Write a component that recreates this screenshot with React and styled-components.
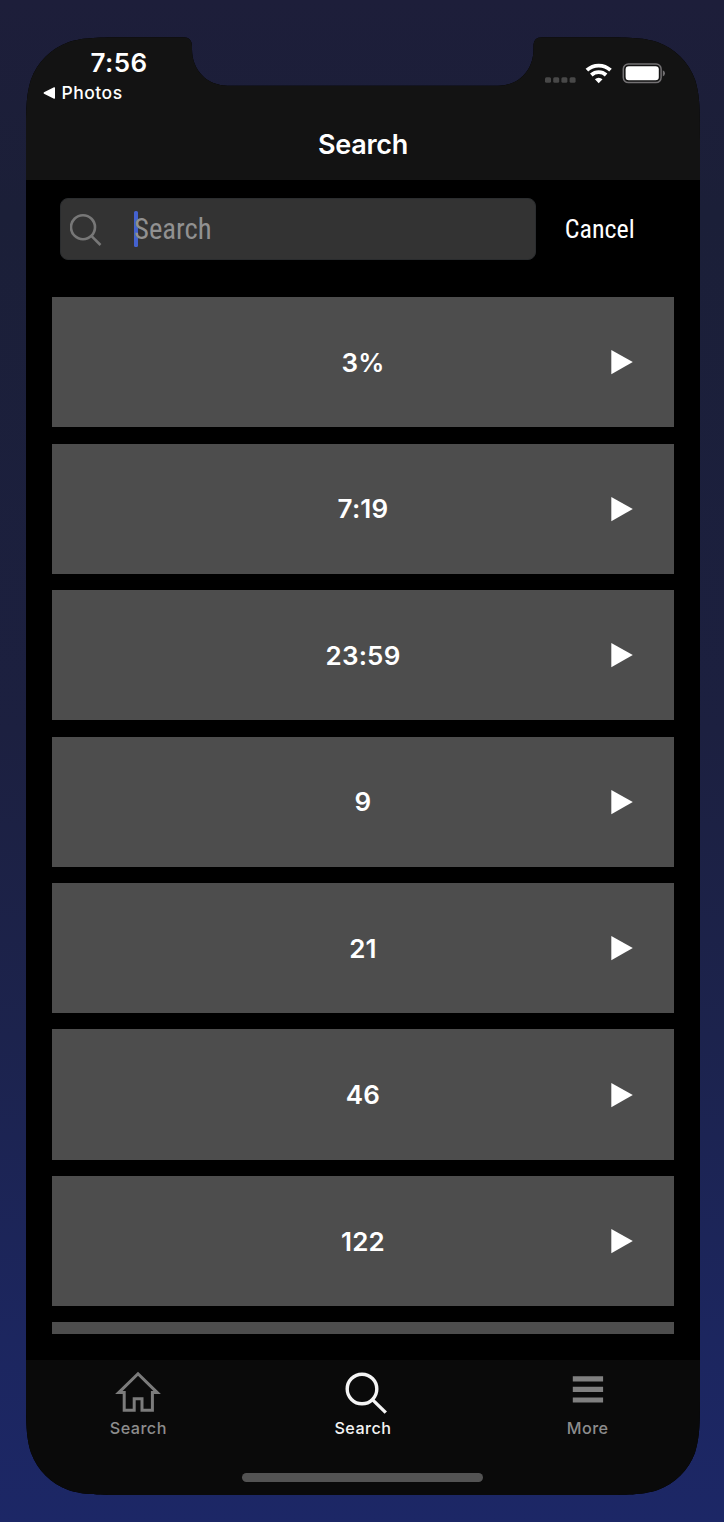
import React from 'react';
import styled, { createGlobalStyle } from 'styled-components';

const GlobalStyle = createGlobalStyle`
  *, *::before, *::after { box-sizing: border-box; }
  body { margin: 0; font-family: Inter, "Liberation Sans", sans-serif; }
  button { appearance: none; border: 0; padding: 0; background: none; color: inherit; font: inherit; }
`;

const Stage = styled.main`
  height: 1522px;
  padding: 37.3px 24px 27px 26px;
  background: linear-gradient(#1d1e3a 0, #1b1f38 14%, #1c2040 48%, #1c234d 68%, #1c265f 88%, #1c2766 100%);
`;

const OUTLINE = [
  'M102.4 0H157C163 0 166 3 166 9.5V12C166 33 181 48.4 202 48.4H472C493 48.4 507.5 33 507.5 12V9.5C507.5 3 510 0 516.5 0H571.6',
  'C601 0 615.8 0 631.7 5C649 11.3 662.7 25 669 42.3C674 58.2 674 73 674 102.4',
  'V1355.3C674 1384.8 674 1399.5 669 1415.4C662.7 1432.7 649 1446.4 631.7 1452.7C615.8 1457.7 601 1457.7 571.6 1457.7',
  'H102.4C73 1457.7 58.2 1457.7 42.3 1452.7C25 1446.4 11.3 1432.7 5 1415.4C0 1399.5 0 1384.8 0 1355.3',
  'V102.4C0 73 0 58.2 5 42.3C11.3 25 25 11.3 42.3 5C58.2 0 73 0 102.4 0Z',
].join('');

const Phone = styled.div`
  height: 1457.7px;
  display: flex;
  flex-direction: column;
  background: #000;
  color: #fff;
  clip-path: path('${OUTLINE}');
`;

const Header = styled.header`
  height: 143px;
  flex: none;
  background: #131313;
`;

const StatusBar = styled.div`
  height: 71px;
  display: flex;
  justify-content: space-between;
  padding: 11px 35.5px 0 16.5px;
`;

const StatusLeft = styled.div`
  display: flex;
  flex-direction: column;
`;

const Clock = styled.time`
  margin-left: 48px;
  font-size: 26px;
  line-height: 30px;
  font-weight: 580;
  letter-spacing: 0.4px;
`;

const BackLink = styled.button`
  display: flex;
  align-items: center;
  gap: 7px;
  margin-top: 3px;
  font-size: 17.5px;
  line-height: 24px;
  font-weight: 500;
  letter-spacing: 0.5px;
`;

const StatusIcons = styled.div`
  display: flex;
  align-items: flex-start;
  padding-top: 14px;
`;

const Title = styled.h1`
  margin: 0;
  padding-top: 19px;
  text-align: center;
  font-size: 27px;
  line-height: 36px;
  font-weight: 580;
  letter-spacing: -0.3px;
`;

const SearchRow = styled.div`
  flex: none;
  display: flex;
  align-items: center;
  height: 117px;
  padding: 0 65.3px 19.5px 34px;
  justify-content: space-between;
`;

const SearchField = styled.div`
  display: flex;
  align-items: center;
  width: 475.5px;
  height: 62px;
  padding-left: 9.3px;
  border-radius: 8px;
  border: 1px solid #2b2d2f;
  background: #333;
`;

const Caret = styled.span`
  width: 4px;
  height: 36px;
  margin-left: 31.3px;
  margin-right: -3.6px;
  border-radius: 1.5px;
  background: #4462cf;
`;

const Condensed = styled.span`
  font-family: "Roboto Condensed", Roboto, sans-serif;
  font-stretch: 75%;
  white-space: nowrap;
  line-height: 36px;
  font-size: ${(p) => p.$size}px;
  color: ${(p) => p.$color};
`;

const List = styled.ul`
  flex: none;
  height: 1036.6px;
  margin: 0 26px;
  padding: 0;
  list-style: none;
  overflow: hidden;
  display: flex;
  flex-direction: column;
  gap: 16.25px;
`;

const Item = styled.li`
  flex: none;
  display: grid;
  grid-template-columns: 1fr auto 1fr;
  align-items: center;
  height: 130.2px;
  padding: 0 41.5px;
  background: #4d4d4d;
  font-size: 26px;
  font-weight: 580;
  letter-spacing: 0.2px;
`;

const Value = styled.span`
  grid-column: 2;
  padding-top: 1px;
  line-height: 32px;
`;

const PlayIcon = styled.svg`
  justify-self: end;
  width: 22px;
  height: 26px;
  fill: #fff;
`;

const TabBar = styled.nav`
  flex: none;
  display: grid;
  grid-template-columns: repeat(3, 1fr);
  height: 108px;
  margin-top: 26px;
  background: #0a0a0a;
`;

const Tab = styled.button`
  display: flex;
  flex-direction: column;
  align-items: center;
  color: ${(p) => (p.$active ? '#f4f4f4' : '#8d8d8d')};
  padding-top: 8.8px;
  font-size: 16.2px;
  line-height: 23px;
  font-weight: 450;
  letter-spacing: 0.45px;
`;

const TabIcon = styled.svg`
  width: 48px;
  height: 48px;
  fill: none;
  stroke: ${(p) => p.$tone || 'currentColor'};
  stroke-width: ${(p) => p.$weight};
`;

const HomeArea = styled.div`
  flex: 1;
  display: flex;
  justify-content: center;
  align-items: flex-start;
  background: #0a0a0a;
  padding: 5.4px 0.6px 0 0;
`;

const HomeIndicator = styled.div`
  width: 241px;
  height: 8.5px;
  border-radius: 5px;
  background: #535353;
`;

const values = ['3%', '7:19', '23:59', '9', '21', '46', '122', ''];

export default function App() {
  return (
    <>
      <GlobalStyle />
      <Stage>
        <Phone>
          <Header>
            <StatusBar>
              <StatusLeft>
                <Clock>7:56</Clock>
                <BackLink>
                  <svg width="12" height="12" viewBox="0 0 12 12" fill="#fff">
                    <path d="M1 5.3L11 .3Q12 0 12 1V11Q12 12 11 11.7L1 6.7Q0 6 1 5.3Z" />
                  </svg>
                  Photos
                </BackLink>
              </StatusLeft>
              <StatusIcons>
                <svg width="121" height="24" viewBox="0 0 121 24">
                  <g fill="#484848">
                    <rect x="1" y="15.2" width="6" height="5.6" rx="1.5" />
                    <rect x="9.2" y="15.2" width="6" height="5.6" rx="1.5" />
                    <rect x="17.4" y="15.2" width="6" height="5.6" rx="1.5" />
                    <rect x="25.6" y="15.2" width="6" height="5.6" rx="1.5" />
                  </g>
                  <g fill="none" stroke="#fff" strokeWidth="3.8">
                    <path d="M42.9 8.2A17.3 17.3 0 0 1 66.5 8.2" />
                    <path d="M47.3 13A11 11 0 0 1 62.1 13" />
                  </g>
                  <path d="M50.9 17.2A5.4 5.4 0 0 1 58.5 17.2L54.7 21.2Z" fill="#fff" />
                  <rect x="79.3" y="2" width="37.8" height="18.6" rx="5" fill="none" stroke="#737173" strokeWidth="1.5" />
                  <rect x="81.6" y="4.3" width="33.2" height="14" rx="3.2" fill="#fff" />
                  <path d="M118.8 8.2Q121 9 121 11.3T118.8 14.4Z" fill="#737173" />
                </svg>
              </StatusIcons>
            </StatusBar>
            <Title>Search</Title>
          </Header>
          <SearchRow>
            <SearchField>
              <svg width="32" height="34" viewBox="0 0 32 34" fill="none" stroke="#777" strokeWidth="2.6">
                <circle cx="13" cy="15.2" r="12" />
                <path d="M21.3 23.8L30.5 33" />
              </svg>
              <Caret />
              <Condensed $size={28.7} $color="#919191">Search</Condensed>
            </SearchField>
            <Condensed as="button" $size={26} $color="#fff">Cancel</Condensed>
          </SearchRow>
          <List>
            {values.map((value, i) => (
              <Item key={i}>
                <Value>{value}</Value>
                <PlayIcon viewBox="0 0 22 26"><path d="M.3 .9L21.8 13L.3 25.3Z" /></PlayIcon>
              </Item>
            ))}
          </List>
          <TabBar>
            <Tab>
              <TabIcon viewBox="0 0 48 48" $weight={3} $tone="#7b7b7b">
                <path d="M24 4.8L43.2 23.6H38.4V41.2H28V29.7H20.2V41.2H10.2V23.6H4.8Z" />
              </TabIcon>
              Search
            </Tab>
            <Tab $active>
              <TabIcon viewBox="0 0 48 48" $weight={3.4}>
                <circle cx="23" cy="20" r="14.8" />
                <path d="M33.4 30.6L46.8 43.6" />
              </TabIcon>
              Search
            </Tab>
            <Tab>
              <TabIcon viewBox="0 0 48 48" $weight={5.2} $tone="#808080">
                <path d="M8.8 9.8H39.1M8.8 20.3H39.1M8.8 31H39.1" />
              </TabIcon>
              More
            </Tab>
          </TabBar>
          <HomeArea><HomeIndicator /></HomeArea>
        </Phone>
      </Stage>
    </>
  );
}
